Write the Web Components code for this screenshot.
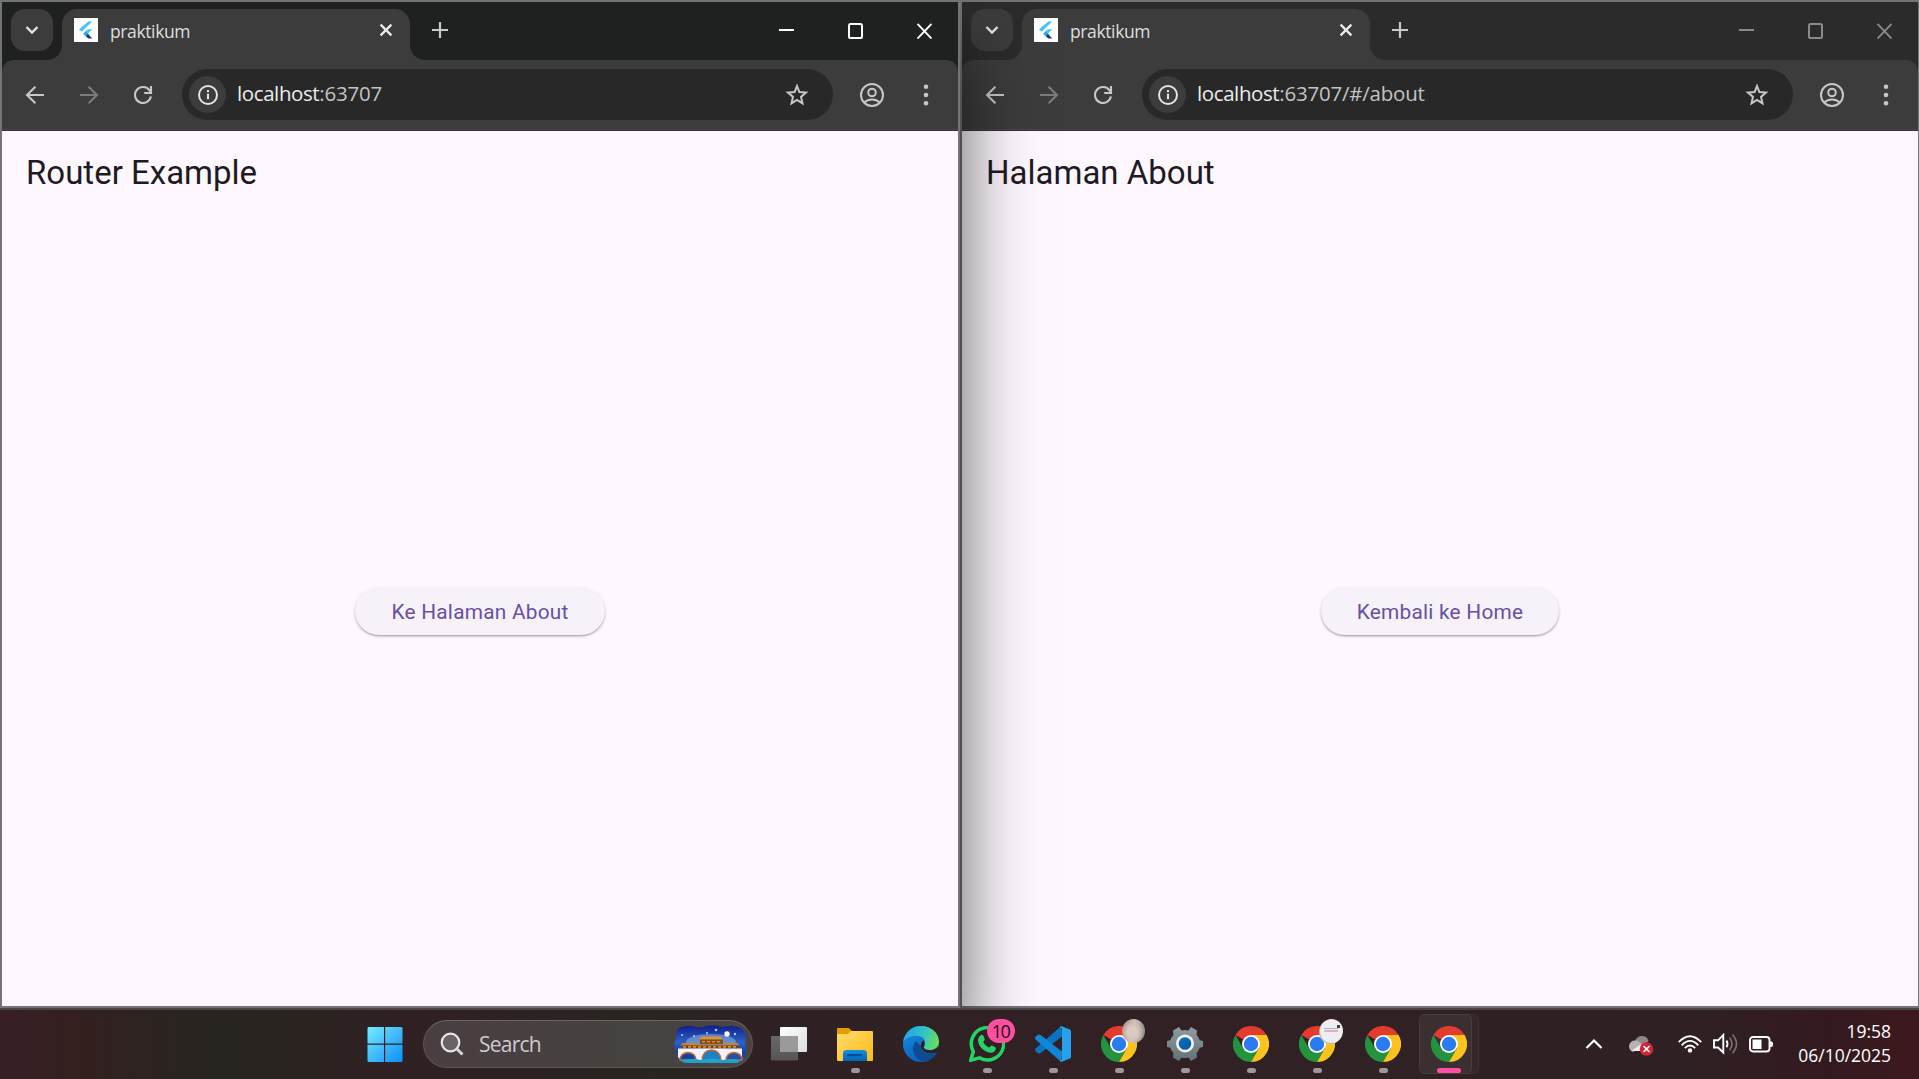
<!DOCTYPE html>
<html lang="id">
<head>
<meta charset="utf-8">
<title>praktikum</title>
<style>
html,body{margin:0;padding:0}
body{width:100vw;height:1079px;overflow:hidden;background:#2f2023}
</style>
</head>
<body>
<desk-top></desk-top>
<script>
const define=(name,html)=>customElements.define(name,class extends HTMLElement{
  constructor(){super();this.attachShadow({mode:'open'}).innerHTML=typeof html==='function'?'':html;this.tpl=html}
  connectedCallback(){if(typeof this.tpl==='function')this.shadowRoot.innerHTML=this.tpl(this)}
});

/* ---------- icons ---------- */
const ic={
 chrome:`<svg viewBox="0 0 48 48"><path fill="#e33b2e" d="M24 24 3.200 12A24 24 0 0 1 44.800 12Z"/><path fill="#23933f" d="M24 48A24 24 0 0 1 3.200 12L13.600 30 24 36 34.400 30Z"/><path fill="#fcc31e" d="M24 12H44.800A24 24 0 0 1 24 48L34.400 30Z"/><circle cx="24" cy="24" r="12" fill="#fff"/><circle cx="24" cy="24" r="9.600" fill="#2b7bf0"/></svg>`,
 down:`<svg width="14" height="10" viewBox="0 0 14 10"><path d="M1.5 2 7 7.5 12.5 2" fill="none" stroke="#e3e3e3" stroke-width="2.4"/></svg>`,
 flutter:`<svg width="24" height="24" viewBox="0 0 24 24"><path fill="#fff" d="M0 0h24v24H0z"/><path fill="#46c4fb" d="M14.2 3.4h4L7.6 13.8 5 11.4z"/><path fill="#46c4fb" d="M14 11.2h4.2L13.6 16 11 13.4z"/><path fill="#1fa2ee" d="m9.2 15.8 2.3-2.3 2.5 2.3-2.4 2.3z"/><path fill="#0b3f9c" d="m11.6 18.1 2.4-2.3 4.2 4.7h-4z"/></svg>`,
 x:`<svg width="14" height="14" viewBox="0 0 14 14"><path d="M1.6 1.6 12.4 12.4M12.4 1.6 1.6 12.4" stroke="#ebebeb" stroke-width="2.3"/></svg>`,
 plus:`<svg width="16" height="16" viewBox="0 0 16 16"><path d="M8 0v16M0 8h16" stroke="#c9c9c9" stroke-width="2.2"/></svg>`,
 back:`<svg width="20" height="20" viewBox="0 0 20 20"><path d="M19 10H2.4M10.4 1.7 2 10l8.4 8.3" fill="none" stroke="#c7c7c7" stroke-width="2.1"/></svg>`,
 fwd:`<svg width="20" height="20" viewBox="0 0 20 20"><path d="M1 10h16.6M9.6 1.7 18 10l-8.4 8.3" fill="none" stroke="#7c7c7c" stroke-width="2.1"/></svg>`,
 reload:`<svg width="20" height="20" viewBox="0 0 20 20"><path d="M17.9 11.4A8 8 0 1 1 16.6 5.4L18 7.2" fill="none" stroke="#c7c7c7" stroke-width="2.1"/><path d="M18 1v7h-6.8" fill="none" stroke="#c7c7c7" stroke-width="2.1"/></svg>`,
 info:`<svg width="22" height="22" viewBox="0 0 22 22"><circle cx="11" cy="11" r="9" fill="none" stroke="#e3e3e3" stroke-width="2"/><path d="M11 9.7v5.6M11 6.1v2.1" stroke="#e3e3e3" stroke-width="2.1"/></svg>`,
 star:`<svg width="24" height="24" viewBox="0 0 24 24"><path d="m12 3 2.4 6 6.6.6-5 4.3 1.5 6.5L12 17l-5.5 3.4L8 13.9 3 9.6 9.6 9z" fill="none" stroke="#c7c7c7" stroke-width="2"/></svg>`,
 user:`<svg width="24" height="24" viewBox="0 0 24 24"><g fill="none" stroke="#c7c7c7" stroke-width="2"><circle cx="12" cy="12" r="11"/><circle cx="12" cy="9.5" r="3.8"/><path d="M4 19.6c4.6-4.2 11.400-4.200 16 0"/></g></svg>`,
 dots:`<svg width="6" height="24" viewBox="0 0 6 24"><g fill="#c7c7c7"><circle cx="3" cy="3.700" r="2.300"/><circle cx="3" cy="12" r="2.300"/><circle cx="3" cy="20.300" r="2.300"/></g></svg>`,
 min:`<svg width="15" height="16" viewBox="0 0 15 16"><path d="M0 6h15v2H0z" fill="currentColor"/></svg>`,
 max:`<svg width="15" height="16" viewBox="0 0 15 16"><rect x="1" y="1" width="13" height="14" rx="1.600" fill="none" stroke="currentColor" stroke-width="2"/></svg>`,
 close:`<svg width="15" height="16" viewBox="0 0 15 16"><path d="M.5 1 14.500 15.500M14.500 1 .5 15.500" stroke="currentColor" stroke-width="1.900"/></svg>`,
 start:`<svg viewBox="0 0 36 36"><defs><linearGradient id="s" x1="0" y1="0" x2="35" y2="35" gradientUnits="userSpaceOnUse"><stop stop-color="#76f0ff"/><stop offset=".5" stop-color="#45bdf9"/><stop offset="1" stop-color="#0a92f8"/></linearGradient></defs><path fill="url(#s)" d="M1.500 1H17v16.500H.5V2zM18.200 1H34.500l1 1V17.500H18.200zM.5 18.700H17V36H1.500l-1-1zM18.200 18.700h17.300V35l-1 1H18.200z"/></svg>`,
 taskview:`<svg viewBox="0 0 36 36"><defs><linearGradient id="a" x2="1" y2="1"><stop stop-color="#fff"/><stop offset="1" stop-color="#ddd"/></linearGradient><linearGradient id="b" x2="0" y2="1"><stop stop-color="#686868"/><stop offset="1" stop-color="#555"/></linearGradient></defs><rect y="10" width="27" height="24.500" rx="1" fill="url(#b)"/><rect x="9" y="1" width="27" height="25" rx="1" fill="url(#a)"/><path d="M9 10H27V26H9z" fill="#9a9a9a"/></svg>`,
 folder:`<svg viewBox="0 0 36 36"><defs><linearGradient id="f" x2="1" y2="1"><stop stop-color="#ffdc6c"/><stop offset="1" stop-color="#fcb914"/></linearGradient><linearGradient id="g" x2="0" y2="1"><stop stop-color="#1491e0"/><stop offset="1" stop-color="#0565b8"/></linearGradient></defs><path fill="#e09e03" d="M0 12V3q0-1 1-1h10q1 0 2 1l2 2.500L12 8z"/><path fill="url(#f)" d="M0 8h10q1 0 2-1l2-2h21q1 0 1 1v28q0 1-1 1H1q-1 0-1-1z"/><path fill="url(#g)" d="M6 35V27.500Q6 24 9.500 24h17Q30 24 30 27.500V35z"/><path fill="#064f92" d="M10 28h15v2.200H10z"/></svg>`,
 edge:`<svg viewBox="0 0 36 36"><defs><linearGradient id="e" x1="2" y1="8" x2="36" y2="18" gradientUnits="userSpaceOnUse"><stop stop-color="#22a4e8"/><stop offset=".5" stop-color="#30c4c8"/><stop offset="1" stop-color="#6ee04d"/></linearGradient><linearGradient id="h" x2=".5" y2="1"><stop stop-color="#168de0"/><stop offset="1" stop-color="#0a62bc"/></linearGradient></defs><circle cx="18" cy="18" r="18" fill="url(#h)"/><path fill="#0d4c92" d="M13 15C6 23 12 34 21 35.700 26 35.300 31 32 33.500 27c-6 2.500-16 .6-15.500-7z"/><path fill="url(#e)" d="M0 16.500C1.500 6 9 0 18 0c10 0 18 7 18 15.500 0 6-4.500 8.500-9 8.500-4 0-6.500-1.500-6-3 2.500-4.500 1-11-7-11C7 10 2 12.500 0 16.500z"/><path fill="#2e2024" d="M21 20.500c-1 1.500 1.200 3.700 6 3.700 3.500 0 6.700-1.500 8.200-4.200L36 27l-2.500-.5c-6.500 2.600-15.800 0-15.500-7 0-3 1.500-4.700 2.500-5 1.500 2 1.300 4 .5 6z"/></svg>`,
 wa:`<svg viewBox="0 0 36 36"><path d="M1.800 34.200 4.300 25.600A16.200 16.200 0 1 1 10.600 31.900z" fill="none" stroke="#23d366" stroke-width="3.500"/><path fill="#23d366" d="M11.500 9.500c1-1 2.500-.8 3 .4l1.200 3c.4 1-1.200 2-1.400 3 1.400 2.800 3.500 4.600 6 5.600 1-.5 1.700-2.500 2.800-2l3.200 1.700c1.400 1-.2 5.200-4 5.500-5.500.2-13.300-6-13.300-12.500 0-2 1.300-3.700 2.500-4.700z"/></svg>`,
 vs:`<svg viewBox="0 0 36 36"><path fill="#0a74c0" d="M26 .3 0 23l.3 2 3 2.500 2-.3L27.500 10z"/><path fill="#0f86d6" d="M26 35.700 0 13l.3-2 3-2.500 2 .3L27.500 26z"/><path fill="#27a0ee" d="M26 0l9 3.500q1 .5 1 1.500v26q0 1-1 1.500L26 36l-1-1 2-2V3l-2-2z"/></svg>`,
 gear:`<svg viewBox="0 0 36 36"><defs><linearGradient id="k" x2="0" y2="1"><stop stop-color="#8f9aa0"/><stop offset="1" stop-color="#65717a"/></linearGradient><linearGradient id="l" x2="1" y2="1"><stop stop-color="#0c72bd"/><stop offset="1" stop-color="#08569c"/></linearGradient></defs><path fill="url(#k)" d="M12 1l2.500 3.500q3.500-1 7 0L24 1 30 4.600 29.500 9q2.400 2.600 3.200 5.200L36 14.900v6.200l-3.300.7q-1 3-3.200 5.200l.5 4.400-6 3.600-2.500-3.500q-3.500 1-7 0L12 35l-6-3.600.5-4.400Q4.300 24.800 3.300 21.800L0 21.100v-6.200l3.300-.7Q4.100 11.600 6.500 9L6 4.600z"/><circle cx="18" cy="17.500" r="9" fill="#f1f1f1"/><circle cx="18" cy="17.500" r="6.300" fill="url(#l)"/></svg>`,
 bridge:`<svg width="72" height="38" viewBox="0 0 72 38"><defs><linearGradient id="n" x2="0" y2="1"><stop stop-color="#101c8c"/><stop offset=".45" stop-color="#2c62c4"/><stop offset=".75" stop-color="#123bb0"/><stop offset="1" stop-color="#1878c4"/></linearGradient></defs><path fill="url(#n)" d="M5 3Q14-1 22 2q6 1 10-1 8-2 16 1 10-2 16 0 7 2 8 10-1 5 0 10-1 5-1 9-2 6-8 7H12Q3 37 3 29 1 25 0 18 3 13 2 9 2 5 5 3z"/><ellipse cx="37" cy="17" rx="25" ry="8" fill="#a9cdec" opacity=".45"/><circle cx="53" cy="9" r="2.700" fill="#fff7df"/><g fill="#b9cdf5"><circle cx="8" cy="10" r="1"/><circle cx="20" cy="11" r="1"/><circle cx="33" cy="8" r="1"/><circle cx="42" cy="5" r="1.300"/><circle cx="61" cy="9" r="1.200"/></g><path fill="#e0962a" d="M28 11.500h18l3 3H24z"/><path fill="#8d4a16" d="M26 14.500h23v4.500H26z"/><path fill="#c9862a" d="M9 18h15l2 1.500h23l2-1.500h12l3 2.500H6z"/><path fill="#7a3d16" d="M8 20.500h57v3H8z"/><path d="M9 21.900h55M28 16.700h19" stroke="#d3902b" stroke-width="1.600" stroke-dasharray="3 2"/><path fill="#f6f1fd" d="M4 23.500h64v9l-4 2.500H7l-3-3z"/><g stroke="#c36d22" stroke-width="1.300"><path fill="#173f9f" d="M6 35q.5-7 8-7.500 7.500.5 8 7.500z"/><path fill="#1f7fc4" d="M28 36q0-10.500 9.500-11Q47 25.500 47 36z"/><path fill="#244fb1" d="M52 35q.5-7 8-7.500 7.500.5 8 7.500z"/></g><path fill="#16a9d6" d="M7 35.500q10-3 20-.5 10-3 22 0 8-2 17 .5-1 2.500-6 2.500H14q-5 0-7-2.500z" opacity=".85"/></svg>`,
 search:`<svg width="24" height="24" viewBox="0 0 24 24"><circle cx="10.500" cy="10.500" r="8.800" fill="#6a6266" stroke="#e6e6e6" stroke-width="2.200"/><path d="m17 17 5.500 5.500" stroke="#d5d5d5" stroke-width="3"/></svg>`,
 up:`<svg width="18" height="12" viewBox="0 0 18 12"><path d="M1.500 10 9 2.500 16.500 10" fill="none" stroke="#fff" stroke-width="2.200"/></svg>`,
 cloud:`<svg width="25" height="22" viewBox="0 0 25 22"><path fill="#8d8888" d="M6 6q2-5 7-5 5 0 6.500 5l-8 7z"/><path fill="#b5b2b3" d="M6 5.500q5 0 7 5L4 17q-4-1.500-4-6 1-5.500 6-5.500z"/><path fill="#ededed" d="M3 15.500 12 9l6 7H5z"/><circle cx="17.500" cy="14" r="6.800" fill="#d92332"/><path d="m14.500 11 6 6m0-6-6 6" stroke="#fff" stroke-width="1.700"/></svg>`,
 wifi:`<svg width="24" height="18" viewBox="0 0 24 18"><g fill="none" stroke="#fff" stroke-width="1.800"><path d="M.7 7.200Q12-4.700 23.300 7.200"/><path d="M3.700 10.300q8.300-8.700 16.600 0"/><path d="M6.800 13.200q5.200-5.400 10.400 0"/></g><circle cx="12" cy="15.400" r="2.200" fill="#fff"/></svg>`,
 vol:`<svg width="25" height="22" viewBox="0 0 25 22"><g fill="none" stroke="#fff" stroke-width="1.900"><path d="M1 7.300h4L10.300 2v17.500L5 14.500H1z"/><path d="M13.500 7.500q2 3.300 0 6.700"/></g><g fill="none" stroke="#777074" stroke-width="1.700"><path d="M16.500 4.500q5 6.300 0 12.700"/><path d="M19.500 1.500q8 9.300 0 18.700"/></g></svg>`,
 bat:`<svg width="25" height="17" viewBox="0 0 25 17"><rect x="1" y="1" width="19.500" height="14.500" rx="3" fill="none" stroke="#fff" stroke-width="1.900"/><path fill="#fff" d="M3.500 3.500h9v9.500h-9zM21 5.500h1.500q1.500 0 1.500 2v1.500q0 2-1.500 2H21z"/></svg>`
};

/* ---------- tab strip ---------- */
define('tab-strip',`<style>
:host{display:flex;height:58px;background:var(--strip);color:var(--ctl);font:18px "Open Sans",sans-serif}
.menu{width:42px;height:42px;margin:7px 0 0 9px;border-radius:14px;background:#3c3c3c;display:grid;place-items:center}
.tab{position:relative;box-sizing:border-box;width:348px;height:51px;margin:7px 0 0 9px;background:#3c3c3c;border-radius:15px 15px 0 0;display:flex;align-items:flex-start;padding:9px 17px 0 12px}
.tab::before,.tab::after{content:"";position:absolute;bottom:0;width:15px;height:15px}
.tab::before{left:-15px;background:radial-gradient(circle at 0 0,transparent 14.500px,#3c3c3c 15.500px)}
.tab::after{right:-15px;background:radial-gradient(circle at 100% 0,transparent 14.500px,#3c3c3c 15.500px)}
.t{margin-left:12px;line-height:24px;color:#dfdfdf;font-size:17.500px;letter-spacing:-.38px;flex:1;padding-top:1px}
.tab .x{padding-top:5px}
svg{display:block}
.plus{margin:20px 0 0 22px}
.ctl{margin:21px 26px 0 auto;display:flex;gap:54px}
</style><div class="menu">${ic.down}</div><div class="tab">${ic.flutter}<span class="t"><slot></slot></span><span class="x">${ic.x}</span></div><span class="plus">${ic.plus}</span><div class="ctl">${ic.min}${ic.max}${ic.close}</div>`);

/* ---------- address toolbar ---------- */
define('address-bar',`<style>
:host{display:block;background:var(--strip)}
.bar{box-sizing:border-box;height:71px;background:#3c3c3c;border-radius:12px 12px 0 0;border-bottom:1px solid #333;box-shadow:inset 0 -1px #484848;display:flex;align-items:flex-start;padding:9px 29px 0 23px}
svg{display:block}
.n{height:50px;display:flex;align-items:center;gap:34px;width:157px;margin-top:1px}
.omni{box-sizing:border-box;width:651px;height:51px;border-radius:26px;background:#282828;display:flex;align-items:center;padding:0 24px 0 7px}
.omni svg{margin-top:1px}
.i{width:37px;height:37px;border-radius:50%;background:#3c3c3c;display:grid;place-items:center}
.u{flex:1;margin-left:11px;font:20.500px/49px "Open Sans",sans-serif;padding-bottom:2px;letter-spacing:-.22px;color:#c3c3c3}
.r{height:50px;display:flex;align-items:center;gap:39px;margin:1px 0 0 27px}
b{font-weight:400;color:#ececec;letter-spacing:-.4px}
</style><div class="bar"><div class="n">${ic.back}${ic.fwd}${ic.reload}</div><div class="omni"><span class="i">${ic.info}</span><span class="u"><b>localhost</b><slot></slot></span>${ic.star}</div><div class="r">${ic.user}${ic.dots}</div></div>`);

/* ---------- Flutter page ---------- */
define('elevated-button',`<style>
:host{display:block;box-sizing:border-box;height:48px;padding:0 36px;border-radius:24px;background:#f7f2fa;box-shadow:0 1.500px 2.500px rgba(0,0,0,.26),0 1px 1px rgba(0,0,0,.1);font:20.800px/50px Roboto,sans-serif;letter-spacing:.25px;color:#6750a4;text-align:center;white-space:nowrap}
</style><slot></slot>`);
define('material-page',`<style>
:host{display:flex;flex-direction:column;height:875px;background:#fef7ff}
header{height:84px;padding-left:24px;font:33px/83px Roboto,sans-serif;color:#1d1b20}
main{flex:1;display:flex;align-items:center;justify-content:center;padding-top:1px}
</style><header><slot name="title"></slot></header><main><slot></slot></main>`);

define('browser-window',`<style>
:host{display:block;box-sizing:border-box;width:960px;height:1008px;border:2px solid #747474;flex:none;position:relative;--strip:#2b2b2b;--ctl:#8a8a8a}
:host([active]){z-index:1;--strip:#1f2120;--ctl:#fff;box-shadow:0 48px 70px rgba(0,0,0,.64)}
</style><tab-strip>praktikum</tab-strip><slot name="url"></slot><slot></slot>`);

/* ---------- taskbar ---------- */
define('task-icon',el=>`<style>
:host{display:block;position:relative;width:36px;height:36px;margin:0 15px;flex:none}
svg{display:block;width:36px;height:36px}
.dot{position:absolute;left:14px;top:42px;width:9px;height:5px;border-radius:3px;background:#9f9799}
:host([active]) .dot{left:6px;width:24px;background:#ff4fa0}
.bg{position:absolute;left:-12px;top:-12px;width:53px;height:60px;box-sizing:border-box;border:1px solid #4a3d40;border-radius:6px;background:#3c2f32}
.bg.b{width:60px;background:#33272a;border-color:#3f3235}
.pic{position:relative}
.badge{position:absolute;left:18px;top:-7px;width:28px;height:24px;border-radius:12px;background:#ff4fa0;color:#1b0b12;font:18px/24px "Open Sans",sans-serif;letter-spacing:-1.500px;text-indent:-1px;text-align:center}
.ava{position:absolute;left:21px;top:-7px;width:23px;height:24px;border-radius:50%}
.p1{background:radial-gradient(ellipse at 45% 55%,#dccbc2 25%,transparent 65%),linear-gradient(100deg,#9d8077,#cfbdb4 50%,#7d8770)}
.p2{background:#efedf0;box-shadow:-1px 1px 0 #b9b7ba}
.p2::after{content:"";position:absolute;left:4px;top:9px;width:14px;height:4px;background:linear-gradient(#b5a9cf 30%,#efedf0 30% 60%,#d6b5c3 60%)}
.p2::before{content:"";position:absolute;right:3px;top:6px;width:3px;height:3px;background:#33423f}
</style>${el.hasAttribute('active')?'<div class="bg b"></div><div class="bg"></div>':''}<div class="pic">${ic[el.getAttribute('kind')]}</div>${el.hasAttribute('badge')?`<span class="badge">${el.getAttribute('badge')}</span>`:''}${el.hasAttribute('avatar')?`<span class="ava p${el.getAttribute('avatar')}"></span>`:''}${el.hasAttribute('run')?'<span class="dot"></span>':''}`);

define('search-pill',`<style>
:host{box-sizing:border-box;display:flex;align-items:center;width:330px;height:48px;margin:0 0 0 20px;padding:0 6px 0 16px;border:1.500px solid #5d5656;border-top-color:#6d6666;border-radius:24px;background:linear-gradient(90deg,#4a3e41,#46413f 50%,#454441 80%,#4a4544);font:21px/46px "Open Sans",sans-serif;letter-spacing:-.75px;color:#cfcccb}
svg{display:block}span{flex:1;margin-left:15px}
</style>${ic.search}<span>Search</span>${ic.bridge}`);

define('system-tray',`<style>
:host{display:flex;align-items:center;margin-left:auto;height:48px;color:#fff;font:17.500px/24px "Open Sans",sans-serif}
svg{display:block;flex:none}
.c{width:117px;text-align:right;margin:-2px 28px 0 0;letter-spacing:-.02px}
.c div{white-space:nowrap}
.g{display:flex;align-items:center;gap:11px;margin-left:24px}
.k{margin:3px 0 0 26px}
</style>${ic.up}<span class="k">${ic.cloud}</span><span class="g">${ic.wifi}${ic.vol}${ic.bat}</span><div class="c"><div>19:58</div><div>06/10/2025</div></div>`);

define('task-bar',`<style>
:host{box-sizing:border-box;position:relative;z-index:2;display:flex;align-items:flex-start;height:71px;padding:10px 0 0 352px;border-top:2px solid #4a4444;background:linear-gradient(90deg,#371f25 0,#33201f 4%,#2e2321 7%,#282520 11.500%,#2c2321 17%,#302024 21%,#2d2223 27%,#292520 34%,#2f2123 40%,#312124 58%,#302124 75%,#2f2024 88%,#34191e 96%,#3d191f 100%)}
.i{display:flex;margin-top:6px}
search-pill{flex:none}
</style><task-icon class="i" kind="start" style="margin-right:0"></task-icon><search-pill></search-pill><div class="i" style="margin-left:3px"><task-icon kind="taskview"></task-icon><task-icon kind="folder" run></task-icon><task-icon kind="edge"></task-icon><task-icon kind="wa" badge="10" run></task-icon><task-icon kind="vs" run></task-icon><task-icon kind="chrome" avatar="1" run></task-icon><task-icon kind="gear" run></task-icon><task-icon kind="chrome" run></task-icon><task-icon kind="chrome" avatar="2" run></task-icon><task-icon kind="chrome" run></task-icon><task-icon kind="chrome" active run></task-icon></div><system-tray></system-tray>`);

define('desk-top',`<style>
:host{display:block;width:1919px;height:1079px;overflow:hidden}
.w{display:flex;height:1008px}
</style><div class="w">
<browser-window active><address-bar slot="url">:63707</address-bar><material-page><span slot="title">Router Example</span><elevated-button>Ke Halaman About</elevated-button></material-page></browser-window>
<browser-window><address-bar slot="url">:63707/#/about</address-bar><material-page><span slot="title">Halaman About</span><elevated-button>Kembali ke Home</elevated-button></material-page></browser-window>
</div><task-bar></task-bar>`);
</script>
</body>
</html>
